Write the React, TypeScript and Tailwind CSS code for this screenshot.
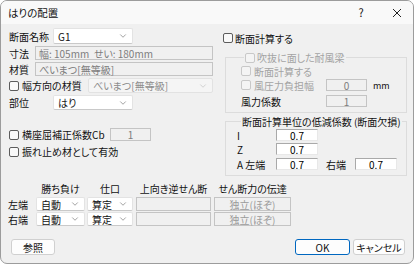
import React from "react";
import { ChevronDown } from "lucide-react";

const Check: React.FC<{ disabled?: boolean }> = ({ disabled }) => (
  <span
    className={
      "inline-block w-[10px] h-[10px] shrink-0 rounded-[2px] border " +
      (disabled ? "border-[#c8c8c8] bg-[#f4f4f4]" : "border-[#5c5c5c] bg-[#f9f9f9]")
    }
  />
);

const Select: React.FC<{ value: string; className?: string; disabled?: boolean }> = ({
  value,
  className = "",
  disabled,
}) => (
  <div
    className={
      "flex items-center justify-between pl-[4px] pr-[4px] rounded-[2px] border " +
      (disabled
        ? "border-[#e2e2e2] bg-[#f5f5f5] text-[#8d8d8d] "
        : "border-[#e3e3e3] border-b-[#c9c9c9] bg-white ") +
      className
    }
  >
    <span>{value}</span>
    <ChevronDown size={10} strokeWidth={1.4} color={disabled ? "#b8b8b8" : "#606060"} />
  </div>
);

const Box: React.FC<{ value?: string; className?: string; center?: boolean; white?: boolean }> = ({
  value = "",
  className = "",
  center,
  white,
}) => (
  <div
    className={
      "flex items-center border " +
      (white
        ? "bg-white border-[#a9a9a9] border-b-[#e8e8e8] border-r-[#e8e8e8] text-black "
        : "bg-[#f0f0f0] border-[#c4c4c4] text-[#7d7d7d] ") +
      (center ? "justify-center " : "pl-[3px] ") +
      className
    }
  >
    {value}
  </div>
);

export default function App() {
  return (
    <div className="w-[414px] h-[264px] bg-white font-['Noto_Sans_CJK_JP',sans-serif] text-[10px] leading-[11px] text-[#111] [font-feature-settings:'palt']">
      <div className="w-[414px] h-[264px] border border-[#9c9c9c] rounded-[7px] overflow-hidden bg-[#f0f0f0] flex flex-col">
        {/* title bar */}
        <div className="h-[23px] shrink-0 bg-[#f9f9f9] flex items-center pl-[7px]">
          <span className="text-[10.5px]">はりの配置</span>
          <span className="ml-auto w-[10px] text-center text-[11px] mr-[26px]">?</span>
          <svg width="10" height="10" viewBox="0 0 10 10" className="mr-[11px]">
            <path d="M1 1L9 9M9 1L1 9" stroke="#222" strokeWidth="1" />
          </svg>
        </div>

        {/* upper area */}
        <div className="h-[158px] shrink-0 flex">
          {/* left column */}
          <div className="w-[212px] pl-[8px] pt-[4px] flex flex-col">
            <div className="h-[16px] flex items-center">
              <span className="w-[44px]">断面名称</span>
              <Select value="G1" className="w-[80px] h-[16px]" />
            </div>
            <div className="h-[14px] mt-[2px] flex items-center">
              <span className="w-[26px]">寸法</span>
              <Box value="幅: 105mm  せい: 180mm" className="flex-1 h-[14px] whitespace-pre" />
            </div>
            <div className="h-[14px] mt-[2px] flex items-center">
              <span className="w-[26px]">材質</span>
              <Box value="べいまつ[無等級]" className="flex-1 h-[14px]" />
            </div>
            <div className="h-[15px] mt-[2px] flex items-center">
              <Check />
              <span className="ml-[3px] w-[66px]">幅方向の材質</span>
              <Select value="べいまつ[無等級]" disabled className="flex-1 h-[15px]" />
            </div>
            <div className="h-[15px] mt-[2px] flex items-center">
              <span className="w-[44px]">部位</span>
              <Select value="はり" className="w-[80px] h-[15px]" />
            </div>
            <div className="h-[13px] mt-[18px] flex items-center">
              <Check />
              <span className="ml-[3px] w-[88px]">横座屈補正係数Cb</span>
              <Box value="1" center className="w-[41px] h-[13px]" />
            </div>
            <div className="h-[13px] mt-[4px] flex items-center">
              <Check />
              <span className="ml-[3px]">振れ止め材として有効</span>
            </div>
          </div>

          {/* right column */}
          <div className="w-[184px] ml-[10px] flex flex-col">
            <div className="h-[12px] mt-[8px] flex items-center">
              <Check />
              <span className="ml-[2px]">断面計算する</span>
            </div>
            <fieldset className="mt-[7px] ml-[2px] w-[182px] border border-[#dcdcdc] pl-[15px] pb-[5px]">
              <legend className="ml-[3px] px-[1px] h-[13px] flex items-center">
                <Check disabled />
                <span className="ml-[2px] text-[#a3a3a3]">吹抜に面した耐風梁</span>
              </legend>
              <div className="h-[12px] mt-[1px] flex items-center text-[#a3a3a3]">
                <Check disabled />
                <span className="ml-[3px]">断面計算する</span>
              </div>
              <div className="h-[12px] mt-[2px] flex items-center">
                <Check disabled />
                <span className="ml-[3px] w-[72px] text-[#a3a3a3]">風圧力負担幅</span>
                <Box value="0" center className="w-[41px] h-[12px]" />
                <span className="ml-[6px] text-[9px]">mm</span>
              </div>
              <div className="h-[12px] mt-[4px] flex items-center">
                <span className="w-[85px]">風力係数</span>
                <Box value="1" center className="w-[41px] h-[12px]" />
              </div>
            </fieldset>
            <fieldset className="mt-[2px] ml-[2px] w-[182px] border border-[#dcdcdc] pl-[11px] pb-[5px]">
              <legend className="ml-[4px] px-[1px] h-[13px] flex items-center">
                断面計算単位の低減係数 (断面欠損)
              </legend>
              <div className="h-[12px] mt-[1px] flex items-center">
                <span className="w-[39px]">I</span>
                <Box value="0.7" center white className="w-[42px] h-[12px]" />
              </div>
              <div className="h-[12px] mt-[2px] flex items-center">
                <span className="w-[39px]">Z</span>
                <Box value="0.7" center white className="w-[42px] h-[12px]" />
              </div>
              <div className="h-[12px] mt-[3px] flex items-center">
                <span className="w-[39px]">A 左端</span>
                <Box value="0.7" center white className="w-[42px] h-[12px]" />
                <span className="ml-[8px] w-[29px]">右端</span>
                <Box value="0.7" center white className="w-[42px] h-[12px]" />
              </div>
            </fieldset>
          </div>
        </div>

        {/* joint table */}
        <div className="pl-[7px] flex flex-col">
          <div className="h-[12px] flex items-center">
            <span className="w-[28px]" />
            <span className="w-[49px] text-center">勝ち負け</span>
            <span className="w-[46px] ml-[2px] text-center">仕口</span>
            <span className="w-[75px] ml-[3px] text-center">上向き逆せん断</span>
            <span className="w-[77px] ml-[3px] text-center">せん断力の伝達</span>
          </div>
          {["左端", "右端"].map((side, i) => (
            <div key={side} className={"h-[14px] flex items-center " + (i === 0 ? "mt-[3px]" : "mt-[1px]")}>
              <span className="w-[28px]">{side}</span>
              <Select value="自動" className="w-[49px] h-[14px]" />
              <Select value="算定" className="w-[46px] h-[14px] ml-[2px]" />
              <Box className="w-[75px] h-[14px] ml-[3px]" />
              <Box value="独立(ほぞ)" center className="w-[77px] h-[14px] ml-[3px] text-[#9a9a9a]" />
            </div>
          ))}
        </div>

        {/* buttons */}
        <div className="mt-[13px] h-[16px] flex items-center pl-[10px] pr-[8px]">
          <div className="w-[44px] h-[16px] rounded-[3px] border border-[#d0d0d0] bg-[#fdfdfd] flex items-center justify-center">
            参照
          </div>
          <div className="ml-auto w-[55px] h-[16px] rounded-[3px] border border-[#0067c0] bg-[#fdfdfd] flex items-center justify-center">
            OK
          </div>
          <div className="ml-[3px] w-[52px] h-[16px] rounded-[3px] border border-[#d0d0d0] bg-[#fdfdfd] flex items-center justify-center">
            キャンセル
          </div>
        </div>
      </div>
    </div>
  );
}
